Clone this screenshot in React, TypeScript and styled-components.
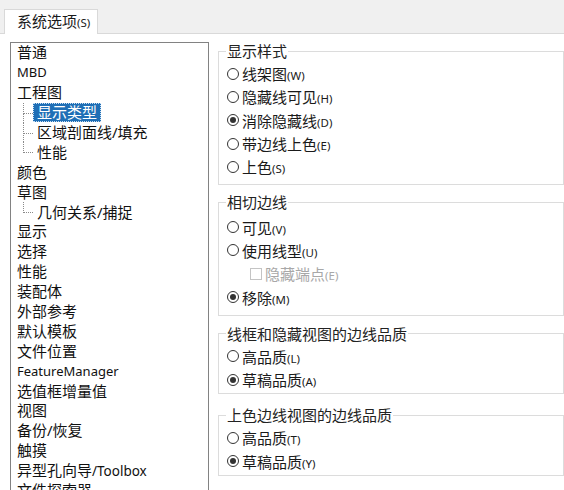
import React from 'react';
import styled, { createGlobalStyle } from 'styled-components';

const GlobalStyle = createGlobalStyle`
  html, body {
    margin: 0;
    padding: 0;
    background: #f0f0f0;
  }
  body {
    font-family: "Noto Sans", "Noto Sans CJK SC", sans-serif;
    color: #1a1a1a;
  }
`;

type TreeItem = {
  text: string;
  hot?: string;
  child?: boolean;
  last?: boolean;
  selected?: boolean;
  latin?: boolean;
};

const treeItems: TreeItem[] = [
  { text: '普通' },
  { text: 'MBD', latin: true },
  { text: '工程图' },
  { text: '显示类型', child: true, selected: true },
  { text: '区域剖面线/填充', child: true },
  { text: '性能', child: true, last: true },
  { text: '颜色' },
  { text: '草图' },
  { text: '几何关系/捕捉', child: true, last: true },
  { text: '显示' },
  { text: '选择' },
  { text: '性能' },
  { text: '装配体' },
  { text: '外部参考' },
  { text: '默认模板' },
  { text: '文件位置' },
  { text: 'FeatureManager', latin: true },
  { text: '选值框增量值' },
  { text: '视图' },
  { text: '备份/恢复' },
  { text: '触摸' },
  { text: '异型孔向导', hot: '/Toolbox' },
  { text: '文件探索器' },
];

type Option = {
  label: string;
  key: string;
  kind?: 'radio' | 'check';
  checked?: boolean;
  disabled?: boolean;
};

type Group = {
  title: string;
  gap: number;
  padTop: number;
  padBottom: number;
  options: Option[];
};

const groups: Group[] = [
  {
    title: '显示样式',
    gap: 0,
    padTop: 1,
    padBottom: 6,
    options: [
      { label: '线架图', key: 'W' },
      { label: '隐藏线可见', key: 'H' },
      { label: '消除隐藏线', key: 'D', checked: true },
      { label: '带边线上色', key: 'E' },
      { label: '上色', key: 'S' },
    ],
  },
  {
    title: '相切边线',
    gap: 7,
    padTop: 3,
    padBottom: 6,
    options: [
      { label: '可见', key: 'V' },
      { label: '使用线型', key: 'U' },
      { label: '隐藏端点', key: 'E', kind: 'check', disabled: true },
      { label: '移除', key: 'M', checked: true },
    ],
  },
  {
    title: '线框和隐藏视图的边线品质',
    gap: 8,
    padTop: 1,
    padBottom: 2,
    options: [
      { label: '高品质', key: 'L' },
      { label: '草稿品质', key: 'A', checked: true },
    ],
  },
  {
    title: '上色边线视图的边线品质',
    gap: 11,
    padTop: 1,
    padBottom: 2,
    options: [
      { label: '高品质', key: 'T' },
      { label: '草稿品质', key: 'Y', checked: true },
    ],
  },
];

export default function App() {
  return (
    <>
      <GlobalStyle />
      <Page>
        <TabStrip>
          <Tab>
            系统选项<Hot>(S)</Hot>
          </Tab>
        </TabStrip>
        <Body>
          <Tree>
            {treeItems.map((item, i) => (
              <TreeRow key={i} $child={!!item.child} $last={!!item.last}>
                <TreeLabel $selected={!!item.selected} $latin={!!item.latin}>
                  {item.text}
                  {item.hot && <LatinTail>{item.hot}</LatinTail>}
                </TreeLabel>
              </TreeRow>
            ))}
          </Tree>
          <Options>
            {groups.map((g) => (
              <GroupBox key={g.title} $gap={g.gap} $padTop={g.padTop} $padBottom={g.padBottom}>
                <Legend>{g.title}</Legend>
                {g.options.map((o) => (
                  <OptionRow key={o.label} $indent={o.kind === 'check'} $disabled={!!o.disabled}>
                    {o.kind === 'check' ? <CheckBox /> : <Radio $checked={!!o.checked} />}
                    <span>
                      {o.label}
                      <Hot>({o.key})</Hot>
                    </span>
                  </OptionRow>
                ))}
              </GroupBox>
            ))}
          </Options>
        </Body>
      </Page>
    </>
  );
}

const Page = styled.div`
  width: 564px;
  height: 490px;
  overflow: hidden;
  display: flex;
  flex-direction: column;
`;

const TabStrip = styled.div`
  height: 34px;
  box-sizing: border-box;
  padding: 9px 0 0 4px;
  display: flex;
  align-items: flex-end;
  border-bottom: 1px solid #d9d9d9;
`;

const Tab = styled.div`
  width: 94px;
  height: 25px;
  box-sizing: border-box;
  margin-bottom: -1px;
  padding-left: 12px;
  background: #ffffff;
  border: 1px solid #d9d9d9;
  border-bottom: none;
  font-size: 15px;
  line-height: 23px;
  white-space: nowrap;
`;

const Hot = styled.span`
  font-size: 11.5px;
`;

const Body = styled.div`
  flex: 1;
  background: #ffffff;
  display: flex;
  align-items: flex-start;
  padding: 8px 0 0 10px;
`;

const Tree = styled.div`
  width: 199px;
  height: 470px;
  box-sizing: border-box;
  border: 1px solid #828282;
  flex-shrink: 0;
  overflow: hidden;
`;

const TreeRow = styled.div<{ $child: boolean; $last: boolean }>`
  position: relative;
  height: 19.9px;
  display: flex;
  align-items: center;
  padding-left: ${(p) => (p.$child ? 22 : 2)}px;

  ${(p) =>
    p.$child &&
    `
    &::before {
      content: '';
      position: absolute;
      left: 12px;
      top: 0;
      width: 9px;
      height: 10px;
      border-left: 1px dotted #8a8a8a;
      border-bottom: 1px dotted #8a8a8a;
    }
  `}

  ${(p) =>
    p.$child &&
    !p.$last &&
    `
    &::after {
      content: '';
      position: absolute;
      left: 12px;
      top: 10px;
      bottom: 0;
      border-left: 1px dotted #8a8a8a;
    }
  `}
`;

const TreeLabel = styled.span<{ $selected: boolean; $latin: boolean }>`
  padding: 0 3px 1px;
  height: 19px;
  box-sizing: border-box;
  line-height: 16px;
  font-size: ${(p) => (p.$latin ? 13 : 15)}px;
  white-space: nowrap;
  color: ${(p) => (p.$selected ? '#ffffff' : '#111111')};
  background: ${(p) => (p.$selected ? '#1f6fb6' : 'transparent')};
  border: 1px dotted ${(p) => (p.$selected ? '#c9def2' : 'transparent')};
`;

const LatinTail = styled.span`
  font-size: 13.5px;
`;

const Options = styled.div`
  width: 346px;
  margin-left: 9px;
  margin-top: -1px;
  display: flex;
  flex-direction: column;
`;

const GroupBox = styled.fieldset<{ $gap: number; $padTop: number; $padBottom: number }>`
  margin: ${(p) => p.$gap}px 0 0 0;
  padding: ${(p) => p.$padTop}px 8px ${(p) => p.$padBottom}px 8px;
  border: 1px solid #dcdcdc;
  min-width: 0;
`;

const Legend = styled.legend`
  padding: 0 1px;
  margin-left: -1px;
  font-size: 15px;
  line-height: 20px;
  color: #222222;
`;

const OptionRow = styled.div<{ $indent: boolean; $disabled: boolean }>`
  height: 23.3px;
  display: flex;
  align-items: center;
  gap: 3px;
  padding-left: ${(p) => (p.$indent ? 23 : 0)}px;
  font-size: 15px;
  color: ${(p) => (p.$disabled ? '#a8a8a8' : '#1a1a1a')};
  white-space: nowrap;
`;

const Radio = styled.span<{ $checked: boolean }>`
  width: 12px;
  height: 12px;
  box-sizing: border-box;
  border-radius: 50%;
  border: 1px solid #333333;
  background: #ffffff;
  display: flex;
  align-items: center;
  justify-content: center;
  flex-shrink: 0;

  &::after {
    content: '';
    width: 6px;
    height: 6px;
    border-radius: 50%;
    background: ${(p) => (p.$checked ? '#333333' : 'transparent')};
  }
`;

const CheckBox = styled.span`
  width: 12px;
  height: 12px;
  box-sizing: border-box;
  border: 1px solid #c4c4c4;
  background: #ffffff;
  flex-shrink: 0;
`;
